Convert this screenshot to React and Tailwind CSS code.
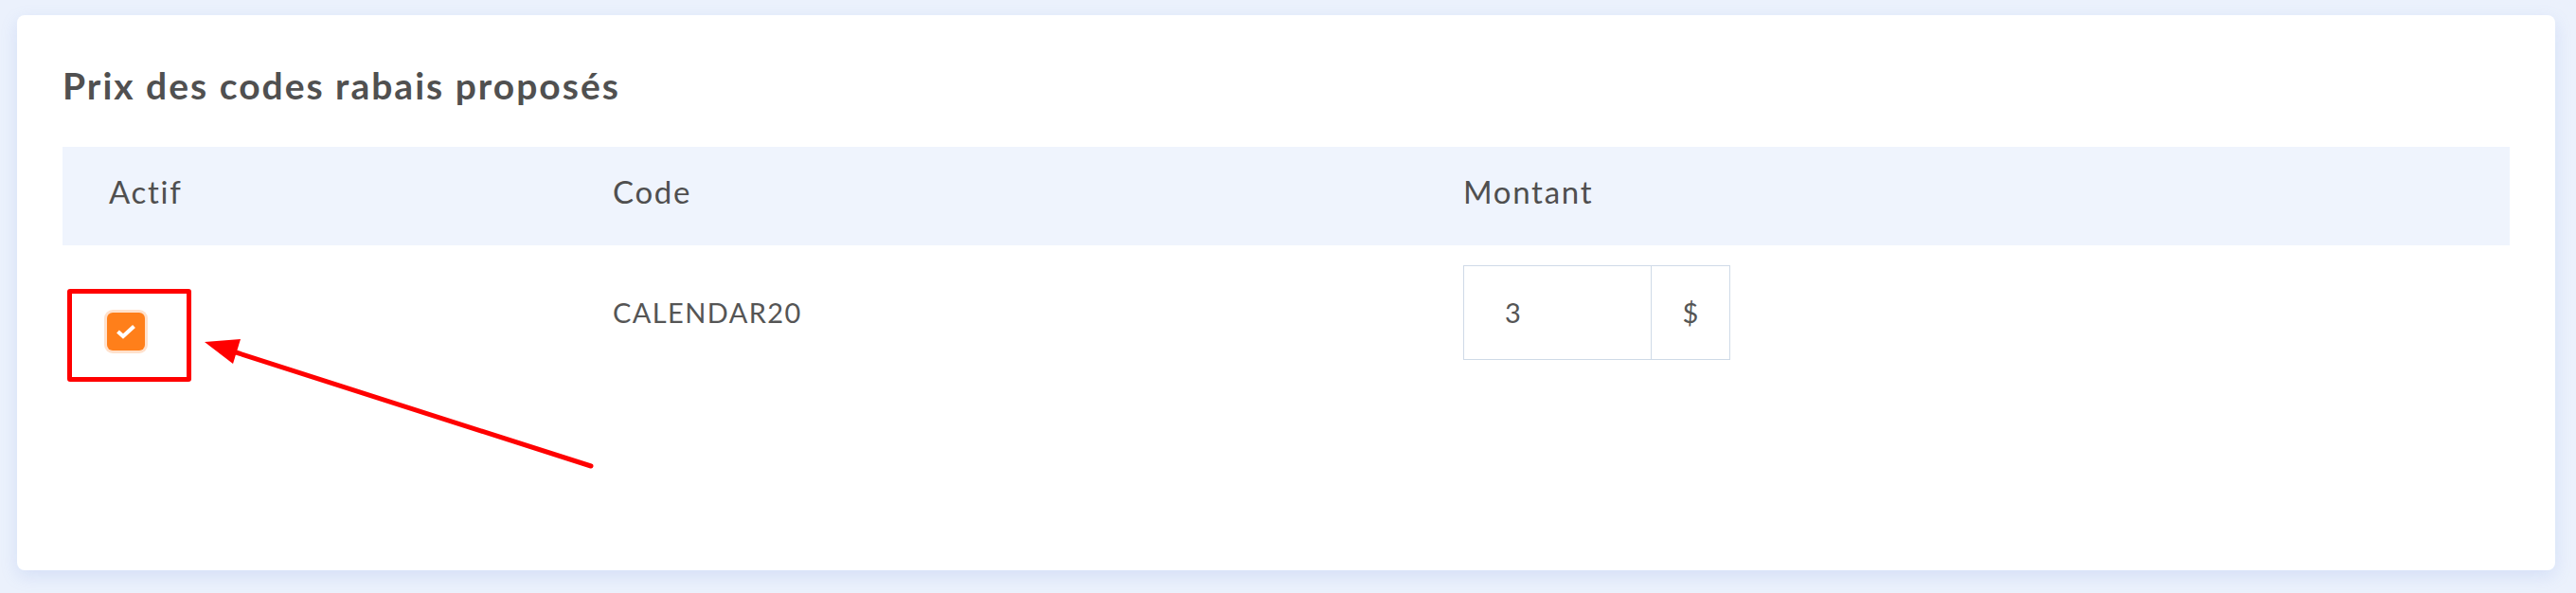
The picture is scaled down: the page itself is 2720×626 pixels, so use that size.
import React from 'react'

const font = { fontFamily: 'Lato, "Noto Sans", sans-serif' }

export default function App() {
  return (
    <div className="relative w-full h-[626px] bg-[#ebf1fc] pt-[16px] pl-[18px] pr-[22px] pb-[24px]" style={font}>
      <div className="h-full bg-white rounded-lg shadow-[0_6px_18px_rgba(110,145,220,0.18)] px-[48px] pt-[50px]">
        {/* Title */}
        <h2 className="text-[39px] leading-[48px] font-bold text-[#505050] tracking-[2px]">
          Prix des codes rabais proposés
        </h2>

        {/* Table */}
        <div className="mt-[41px]">
          <div className="grid grid-cols-[532px_898px_1fr] h-[104px] bg-[#eff4fd] text-[33px] leading-[38px] text-[#4f4f4f] pt-[28px] tracking-[1.7px]">
            <div className="pl-[49px]">Actif</div>
            <div className="pl-[49px]">Code</div>
            <div className="pl-[49px]">Montant</div>
          </div>

          <div className="grid grid-cols-[532px_898px_1fr] items-start text-[#555]">
            <div className="pl-[47px] pt-[71px]">
              <div className="w-[40px] h-[40px] rounded-[6px] bg-[#ff7f1a] ring-[3px] ring-[#ffe1cc] flex items-center justify-center">
                <svg width="22" height="16" viewBox="0 0 22 16">
                  <polyline points="2.5,8 8,13 19.5,2.5" fill="none" stroke="white" strokeWidth="4.2" strokeLinejoin="miter" />
                </svg>
              </div>
            </div>
            <div className="pl-[49px] pt-[21px] h-[121px] flex items-center text-[29px] tracking-[1.4px]">
              CALENDAR20
            </div>
            <div className="pl-[49px] pt-[21px]">
              <div className="flex w-[282px] h-[100px] border border-[#cfdae7] text-[29px] text-[#555]">
                <div className="w-[197px] flex items-center pl-[43px]">3</div>
                <div className="flex-1 border-l border-[#cfdae7] flex items-center justify-center">$</div>
              </div>
            </div>
          </div>
        </div>
      </div>

      {/* annotation */}
      <div className="absolute left-[71px] top-[305px] w-[131px] h-[98px] border-[5px] border-[#ff0000] rounded-[3px]" />
      <svg className="absolute inset-0 pointer-events-none" width="2720" height="626">
        <line x1="624" y1="492" x2="246" y2="371" stroke="#ff0000" strokeWidth="5" strokeLinecap="round" />
        <polygon points="216,361 254,358 246,384" fill="#ff0000" />
      </svg>
    </div>
  )
}
